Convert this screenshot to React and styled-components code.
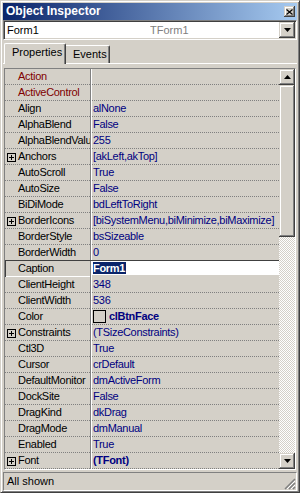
import React from 'react';
import styled, { createGlobalStyle, css } from 'styled-components';

const Global = createGlobalStyle`
  html, body { margin: 0; padding: 0; background: #d4d0c8; }
  body { font-family: "Liberation Sans", Arial, sans-serif; font-size: 11px; color: #000; }
  * { box-sizing: border-box; }
`;

const raised = css`
  background: #d4d0c8;
  box-shadow: inset -1px -1px #404040, inset 1px 1px #d4d0c8, inset -2px -2px #808080, inset 2px 2px #fff;
`;

const Window = styled.div`
  width: 300px;
  height: 493px;
  background: #d4d0c8;
  border: 1px solid;
  border-color: #d4d0c8 #404040 #404040 #d4d0c8;
  box-shadow: inset 1px 1px #fff, inset -1px -1px #808080;
  padding: 2px;
  display: flex;
  flex-direction: column;
  overflow: hidden;
`;

const TitleBar = styled.div`
  flex: none;
  height: 17px;
  background: linear-gradient(to right, #0a246a, #a6caf0);
  display: flex;
  align-items: center;
  justify-content: space-between;
  padding: 0 2px 0 3px;
`;

const TitleText = styled.span`
  color: #fff;
  font-weight: bold;
  font-size: 12px;
  line-height: 17px;
  white-space: nowrap;
`;

const CloseButton = styled.div`
  ${raised};
  width: 11px;
  height: 11px;
  display: flex;
  align-items: center;
  justify-content: center;
`;

const Combo = styled.div`
  flex: none;
  height: 20px;
  border: 1px solid;
  border-color: #808080 #fff #fff #808080;
  box-shadow: inset 1px 1px #404040, inset -1px -1px #d4d0c8;
  padding: 1px;
  background: #fff;
  display: grid;
  grid-template-columns: 145px 1fr 16px;
  align-items: center;
`;

const ComboText = styled.span`
  padding-left: ${p => p.$pad || 0}px;
  color: ${p => p.$muted ? '#808080' : '#000'};
  font-size: 11px;
  white-space: nowrap;
  overflow: hidden;
`;

const DropButton = styled.div`
  ${raised};
  width: 16px;
  height: 16px;
  display: flex;
  align-items: center;
  justify-content: center;
`;

const TabStrip = styled.div`
  flex: none;
  height: 22px;
  margin-top: 1px;
  padding-left: 3px;
  display: flex;
  align-items: flex-end;
`;

const Tab = styled.div`
  position: relative;
  height: 18px;
  width: ${p => p.$w}px;
  padding-left: 8px;
  z-index: 1;
  border-top: 1px solid #fff;
  border-left: 1px solid #fff;
  border-right: 1px solid #404040;
  border-top-left-radius: 2px;
  border-top-right-radius: 2px;
  box-shadow: inset -1px 0 #808080;
  background: #d4d0c8;
  line-height: 16px;
  font-size: 11px;
  white-space: nowrap;
  ${p => p.$active && css`
    margin: 0 -2px -1px -2px;
    height: 21px;
    padding-left: 7px;
    z-index: 2;
    line-height: 17px;
  `}
`;

const Panel = styled.div`
  flex: none;
  border-top: 1px solid #fff;
  padding: 4px 1px 1px 1px;
`;

const Grid = styled.div`
  width: 292px;
  border: 1px solid;
  border-color: #808080 #fff #fff #808080;
  display: flex;
`;

const Rows = styled.div`
  width: 274px;
  display: flex;
  flex-direction: column;
  letter-spacing: -0.3px;
`;

const dotted = css`
  background-image: linear-gradient(to right, #808080 50%, transparent 50%);
  background-size: 2px 1px;
  background-repeat: repeat-x;
  background-position: left bottom;
`;

const Row = styled.div`
  display: flex;
  height: 16px;
  flex: none;
  ${p => p.$selected && css`
    height: 17px;
    margin-top: -1px;
    border-top: 1px solid #404040;
    position: relative;
  `}
`;

const NameCell = styled.div`
  position: relative;
  width: 86px;
  flex: none;
  height: 100%;
  border-right: 1px solid #808080;
  padding-left: 13px;
  line-height: 15px;
  white-space: nowrap;
  overflow: hidden;
  color: ${p => p.$ref ? '#800000' : '#000'};
  ${p => p.$selected ? css`
    box-shadow: inset 1px 0 #404040, inset 0 -1px #fff;
  ` : dotted}
`;

const ValueCell = styled.div`
  flex: 1;
  height: 100%;
  border-left: 1px solid #fff;
  padding-left: 1px;
  line-height: 15px;
  white-space: nowrap;
  overflow: hidden;
  color: #000080;
  font-weight: ${p => p.$bold ? 'bold' : 'normal'};
  display: flex;
  align-items: flex-start;
  ${p => p.$selected ? css`
    background: #fff;
    box-shadow: inset 0 -2px #d4d0c8, inset 0 -1px #fff;
    padding-top: 1px;
  ` : dotted}
`;

const Expander = styled.div`
  position: absolute;
  left: 2px;
  top: 4px;
  width: 9px;
  height: 9px;
  border: 1px solid #000;
  background: #d4d0c8;
`;

const Swatch = styled.span`
  width: 13px;
  height: 13px;
  margin: 1px 3px 0 0;
  border: 1px solid #000;
  background: ${p => p.$color};
  flex: none;
`;

const Highlight = styled.span`
  background: #0a246a;
  color: #fff;
  font-weight: bold;
  line-height: 12px;
  height: 12px;
  padding: 0 1px 0 0;
`;

const ScrollBar = styled.div`
  width: 16px;
  display: flex;
  flex-direction: column;
`;

const ScrollButton = styled.div`
  ${raised};
  width: 16px;
  height: 16px;
  flex: none;
  display: flex;
  align-items: center;
  justify-content: center;
`;

const Thumb = styled.div`
  ${raised};
  height: 152px;
  flex: none;
`;

const Track = styled.div`
  flex: 1;
  background: repeating-conic-gradient(#fff 0 25%, #d4d0c8 0 50%) 0 0 / 2px 2px;
`;

const StatusBar = styled.div`
  flex: none;
  height: 19px;
  margin-top: 1px;
  display: flex;
`;

const StatusPanel = styled.div`
  flex: 1;
  border: 1px solid;
  border-color: #808080 #fff #fff #808080;
  padding-left: 3px;
  line-height: 17px;
  display: flex;
  justify-content: space-between;
  align-items: flex-end;
`;

const Grip = styled.svg`
  flex: none;
  display: block;
`;

const Arrow = ({ up }) => (
  <svg width="7" height="4" viewBox="0 0 7 4">
    <path d={up ? 'M3.5 0 L7 4 L0 4 Z' : 'M0 0 L7 0 L3.5 4 Z'} fill="#000" />
  </svg>
);

const PlusIcon = () => (
  <svg width="7" height="7" viewBox="0 0 7 7" style={{ display: 'block' }}>
    <rect x="1" y="3" width="5" height="1" fill="#000" />
    <rect x="3" y="1" width="1" height="5" fill="#000" />
  </svg>
);

const rows = [
  { name: 'Action', value: '', ref: true },
  { name: 'ActiveControl', value: '', ref: true },
  { name: 'Align', value: 'alNone' },
  { name: 'AlphaBlend', value: 'False' },
  { name: 'AlphaBlendValue', value: '255' },
  { name: 'Anchors', value: '[akLeft,akTop]', expand: true },
  { name: 'AutoScroll', value: 'True' },
  { name: 'AutoSize', value: 'False' },
  { name: 'BiDiMode', value: 'bdLeftToRight' },
  { name: 'BorderIcons', value: '[biSystemMenu,biMinimize,biMaximize]', expand: true },
  { name: 'BorderStyle', value: 'bsSizeable' },
  { name: 'BorderWidth', value: '0' },
  { name: 'Caption', value: 'Form1', selected: true },
  { name: 'ClientHeight', value: '348' },
  { name: 'ClientWidth', value: '536' },
  { name: 'Color', value: 'clBtnFace', bold: true, swatch: '#d4d0c8' },
  { name: 'Constraints', value: '(TSizeConstraints)', expand: true },
  { name: 'Ctl3D', value: 'True' },
  { name: 'Cursor', value: 'crDefault' },
  { name: 'DefaultMonitor', value: 'dmActiveForm' },
  { name: 'DockSite', value: 'False' },
  { name: 'DragKind', value: 'dkDrag' },
  { name: 'DragMode', value: 'dmManual' },
  { name: 'Enabled', value: 'True' },
  { name: 'Font', value: '(TFont)', bold: true, expand: true },
];

export default function App() {
  return (
    <>
      <Global />
      <Window>
        <TitleBar>
          <TitleText>Object Inspector</TitleText>
          <CloseButton>
            <svg width="7" height="6" viewBox="0 0 7 6">
              <path d="M0.5 0.5 L6.5 5.5 M6.5 0.5 L0.5 5.5" stroke="#000" strokeWidth="1.1" />
            </svg>
          </CloseButton>
        </TitleBar>
        <Combo>
          <ComboText $pad={2}>Form1</ComboText>
          <ComboText $muted>TForm1</ComboText>
          <DropButton><Arrow /></DropButton>
        </Combo>
        <TabStrip>
          <Tab $active $w={62}>Properties</Tab>
          <Tab $w={46}>Events</Tab>
        </TabStrip>
        <Panel>
          <Grid>
            <Rows>
              {rows.map(r => (
                <Row key={r.name} $selected={r.selected}>
                  <NameCell $ref={r.ref} $selected={r.selected}>
                    {r.expand && (
                      <Expander><PlusIcon /></Expander>
                    )}
                    {r.name}
                  </NameCell>
                  <ValueCell $bold={r.bold} $selected={r.selected}>
                    {r.swatch && <Swatch $color={r.swatch} />}
                    {r.selected ? <Highlight>{r.value}</Highlight> : r.value}
                  </ValueCell>
                </Row>
              ))}
            </Rows>
            <ScrollBar>
              <ScrollButton><Arrow up /></ScrollButton>
              <Thumb />
              <Track />
              <ScrollButton><Arrow /></ScrollButton>
            </ScrollBar>
          </Grid>
        </Panel>
        <StatusBar>
          <StatusPanel>
            <span>All shown</span>
            <Grip width="12" height="12" viewBox="0 0 12 12">
              <path d="M11 1 L1 11 M11 5 L5 11 M11 9 L9 11" stroke="#808080" strokeWidth="1.5" />
              <path d="M11 3 L3 11 M11 7 L7 11" stroke="#fff" strokeWidth="1" />
            </Grip>
          </StatusPanel>
        </StatusBar>
      </Window>
    </>
  );
}
